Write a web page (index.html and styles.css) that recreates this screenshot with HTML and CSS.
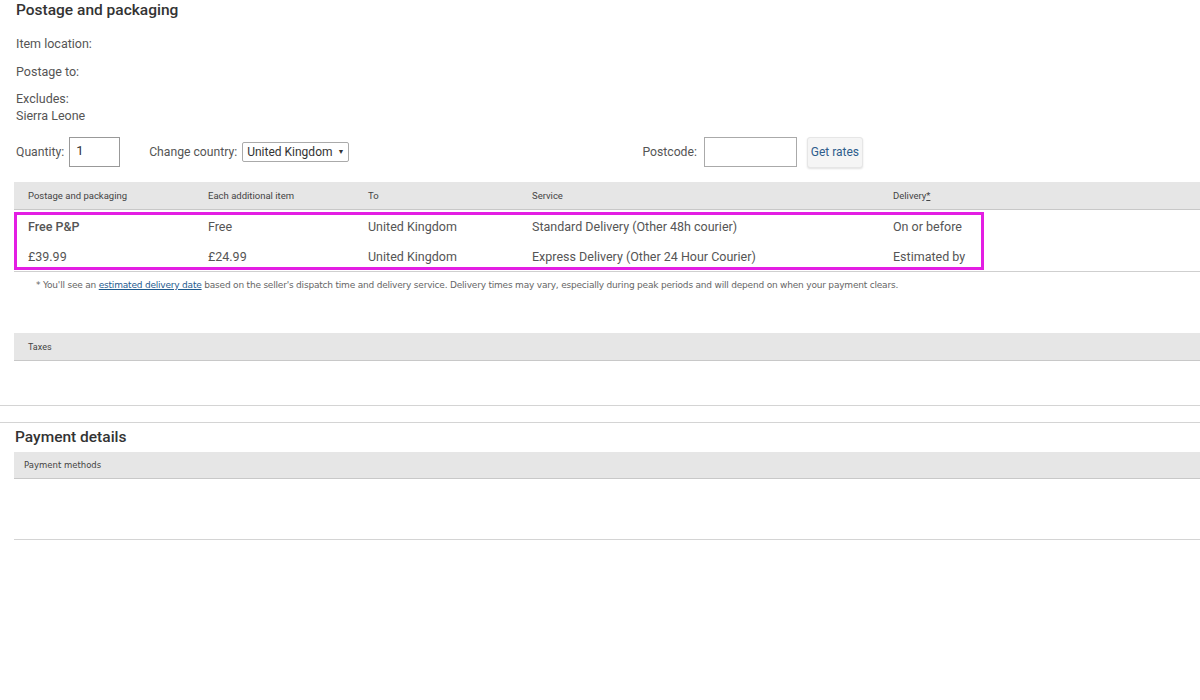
FILE: index.html
```html
<!DOCTYPE html>
<html lang="en">
<head>
<meta charset="utf-8">
<title>Postage and packaging</title>
<link rel="stylesheet" href="styles.css">
</head>
<body>
<section class="postage">
  <h2 class="title">Postage and packaging</h2>
  <div class="info">
    <div class="info-line l1">Item location:</div>
    <div class="info-line l2">Postage to:</div>
    <div class="info-block">
      <div>Excludes:</div>
      <div>Sierra Leone</div>
    </div>
  </div>
  <div class="controls">
    <label class="ctl">Quantity: <span class="qty">1</span></label>
    <label class="ctl country">Change country: <span class="select">United Kingdom <span class="caret">&#9660;</span></span></label>
    <label class="ctl postcode">Postcode: <span class="pc-input"></span></label>
    <span class="btn">Get rates</span>
  </div>

  <div class="table">
    <div class="thead row">
      <div class="c1">Postage and packaging</div>
      <div class="c2">Each additional item</div>
      <div class="c3">To</div>
      <div class="c4">Service</div>
      <div class="c5">Delivery<span class="ast">*</span></div>
    </div>
    <div class="tbody">
      <div class="row trow">
        <div class="c1 strong">Free P&amp;P</div>
        <div class="c2">Free</div>
        <div class="c3">United Kingdom</div>
        <div class="c4">Standard Delivery (Other 48h courier)</div>
        <div class="c5">On or before</div>
      </div>
      <div class="row trow">
        <div class="c1">£39.99</div>
        <div class="c2">£24.99</div>
        <div class="c3">United Kingdom</div>
        <div class="c4">Express Delivery (Other 24 Hour Courier)</div>
        <div class="c5">Estimated by</div>
      </div>
      <div class="highlight"></div>
    </div>
  </div>
  <p class="note">* You'll see an <a class="link" href="#">estimated delivery date</a> based on the seller's dispatch time and delivery service. Delivery times may vary, especially during peak periods and will depend on when your payment clears.</p>

  <div class="bar taxes">Taxes</div>
</section>

<section class="payment">
  <h2 class="title pay-title">Payment details</h2>
  <div class="bar paybar">Payment methods</div>
  <div class="pay-body"></div>
</section>
</body>
</html>
```

FILE: styles.css
```css
* { box-sizing: border-box; }
html, body { margin: 0; padding: 0; background: #fff; }
body {
  font-family: "Roboto", "Liberation Sans", sans-serif;
  color: #555;
  width: 1200px;
  height: 700px;
  overflow: hidden;
}
.postage {
  border-bottom: 1px solid #d4d4d4;
  padding-bottom: 44px;
}
.title {
  margin: 0;
  padding-left: 16px;
  font-size: 15.5px;
  line-height: 20px;
  font-weight: 500;
  color: #333;
}
.info {
  padding-left: 16px;
  font-size: 12.5px;
  color: #555;
}
.info-line { line-height: 18px; }
.l1 { margin-top: 15px; }
.l2 { margin-top: 10px; }
.info-block { margin-top: 9px; line-height: 17px; }

.controls {
  display: flex;
  align-items: center;
  height: 30px;
  margin-top: 13px;
  padding-left: 16px;
  font-size: 12.2px;
  color: #555;
}
.ctl { display: flex; align-items: center; white-space: nowrap; }
.qty {
  display: inline-block;
  width: 51px;
  height: 30px;
  border: 1px solid #999;
  margin-left: 5px;
  padding: 5px 0 0 6px;
  color: #333;
  font-size: 13px;
}
.country { margin-left: 29px; }
.select {
  display: inline-flex;
  align-items: center;
  height: 20px;
  margin-left: 5px;
  padding: 0 4px;
  border: 1px solid #aaa;
  border-radius: 2px;
  color: #333;
  font-size: 12px;
  white-space: nowrap;
}
.caret { font-size: 7px; margin-left: 5px; }
.postcode { margin-left: 293px; }
.pc-input {
  display: inline-block;
  width: 93px;
  height: 30px;
  border: 1px solid #aaa;
  margin-left: 7px;
}
.btn {
  display: inline-flex;
  align-items: center;
  justify-content: center;
  width: 56px;
  height: 31px;
  margin-left: 10px;
  background: #f5f5f5;
  border: 1px solid #e6e6e6;
  border-radius: 3px;
  box-shadow: 0 1px 2px rgba(0,0,0,0.12);
  color: #2f5d8c;
  font-size: 12px;
}

.table { margin: 15px 0 0 14px; }
.row { display: flex; }
.c1 { width: 194px; padding-left: 14px; }
.c2 { width: 160px; }
.c3 { width: 164px; }
.c4 { width: 361px; }
.c5 { flex: 1; }
.thead {
  height: 28px;
  align-items: center;
  background: #e6e6e6;
  border-bottom: 1px solid #c8c8c8;
  font-size: 9.5px;
  color: #444;
}
.ast { text-decoration: underline; }
.tbody {
  position: relative;
  padding: 2px 0 0;
  border-bottom: 1px solid #cfcfcf;
}
.trow {
  height: 29px;
  align-items: center;
  font-size: 12.5px;
  color: #555;
}
.trow + .trow { height: 30px; }
.strong { font-weight: 500; color: #555; }
.highlight {
  position: absolute;
  left: 0;
  top: 2px;
  width: 970px;
  height: 58px;
  border: 3px solid #e31ee3;
}
.note {
  margin: 7px 0 0 36px;
  font-size: 9px;
  line-height: 12px;
  color: #666;
  font-family: "DejaVu Sans", "Liberation Sans", sans-serif;
  letter-spacing: -0.2px;
}
.link { color: #1f5b8f; text-decoration: underline; }
.bar {
  display: flex;
  align-items: center;
  background: #e6e6e6;
  border-bottom: 1px solid #c8c8c8;
  font-size: 9px;
  color: #444;
}
.taxes {
  margin: 42px 0 0 14px;
  height: 28px;
  padding-left: 14px;
}
.payment {
  margin-top: 16px;
  border-top: 1px solid #d4d4d4;
}
.pay-title { margin-top: 4px; padding-left: 15px; }
.paybar {
  margin: 5px 0 0 14px;
  height: 27px;
  padding-left: 10px;
  font-family: "DejaVu Sans", "Liberation Sans", sans-serif;
  font-size: 8.5px;
}
.pay-body {
  margin-left: 14px;
  height: 61px;
  border-bottom: 1px solid #d4d4d4;
}
```
